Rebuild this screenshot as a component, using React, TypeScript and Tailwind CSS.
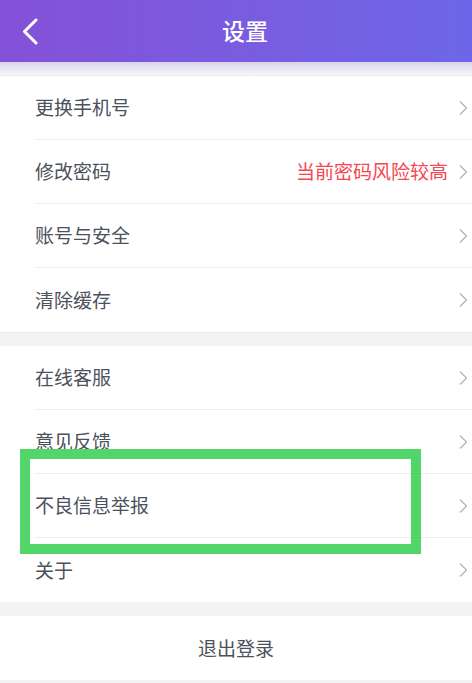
import React from 'react';

const font = { fontFamily: '"Noto Sans CJK SC", "Noto Sans", sans-serif' };

const Chevron: React.FC = () => (
    <svg width="10" height="16" viewBox="0 0 10 16" className="shrink-0">
        <path d="M2 1.5 L8.5 8 L2 14.5" fill="none" stroke="#b3b3b8" strokeWidth="1.3" />
    </svg>
);

interface RowProps {
    label: string;
    hint?: string;
    last?: boolean;
}

const Row: React.FC<RowProps> = ({ label, hint, last }) => (
    <div className="pl-[35px]">
        <div className={`h-[64px] flex items-center pr-[4px] ${last ? '' : 'border-b border-[#ebebed]'}`}>
            <span className="flex-1 text-[19px] leading-none text-[#4c515c] -mt-[2px]">{label}</span>
            {hint && <span className="text-[19px] leading-none text-[#f5464f] mr-[10px] -mt-[2px]">{hint}</span>}
            <Chevron />
        </div>
    </div>
);

export default function App() {
    const groupA = ['更换手机号', '修改密码', '账号与安全', '清除缓存'];
    const groupB = ['在线客服', '意见反馈', '不良信息举报', '关于'];

    return (
        <div className="relative w-[472px] h-[683px] overflow-hidden bg-[#f2f3f5]" style={font}>
            {/* header */}
            <div className="h-[62px] bg-gradient-to-r from-[#8451d7] to-[#6d66e8] flex items-center">
                <div className="w-[60px] pl-[22px] flex items-center">
                    <svg width="16" height="27" viewBox="0 0 16 27">
                        <path d="M14 2 L2.5 13.5 L14 25" fill="none" stroke="#fff" strokeWidth="3" strokeLinecap="round" strokeLinejoin="round" />
                    </svg>
                </div>
                <div className="flex-1 text-center text-white text-[23px] font-medium -ml-[42px] -mt-[2px] pointer-events-none">设置</div>
            </div>
            <div className="h-[14px] bg-gradient-to-b from-[#d9d3ea] to-[#f7f6fb] border-b border-[#ececf0]" />

            <div className="bg-white border-b border-[#ebebed]">
                {groupA.map((l, i) => (
                    <Row key={l} label={l} hint={i === 1 ? '当前密码风险较高' : undefined} last={i === groupA.length - 1} />
                ))}
            </div>

            <div className="h-[13px]" />

            <div className="bg-white">
                {groupB.map((l, i) => (
                    <Row key={l} label={l} last={i === groupB.length - 1} />
                ))}
            </div>

            <div className="h-[14px]" />

            <div className="bg-white h-[64px] flex items-center justify-center text-[19px] text-[#4c515c]">退出登录</div>

            {/* annotation box */}
            <div className="absolute left-[20px] top-[449px] w-[401px] h-[105px] border-[10px] border-[#52d66a]" />
        </div>
    );
}
